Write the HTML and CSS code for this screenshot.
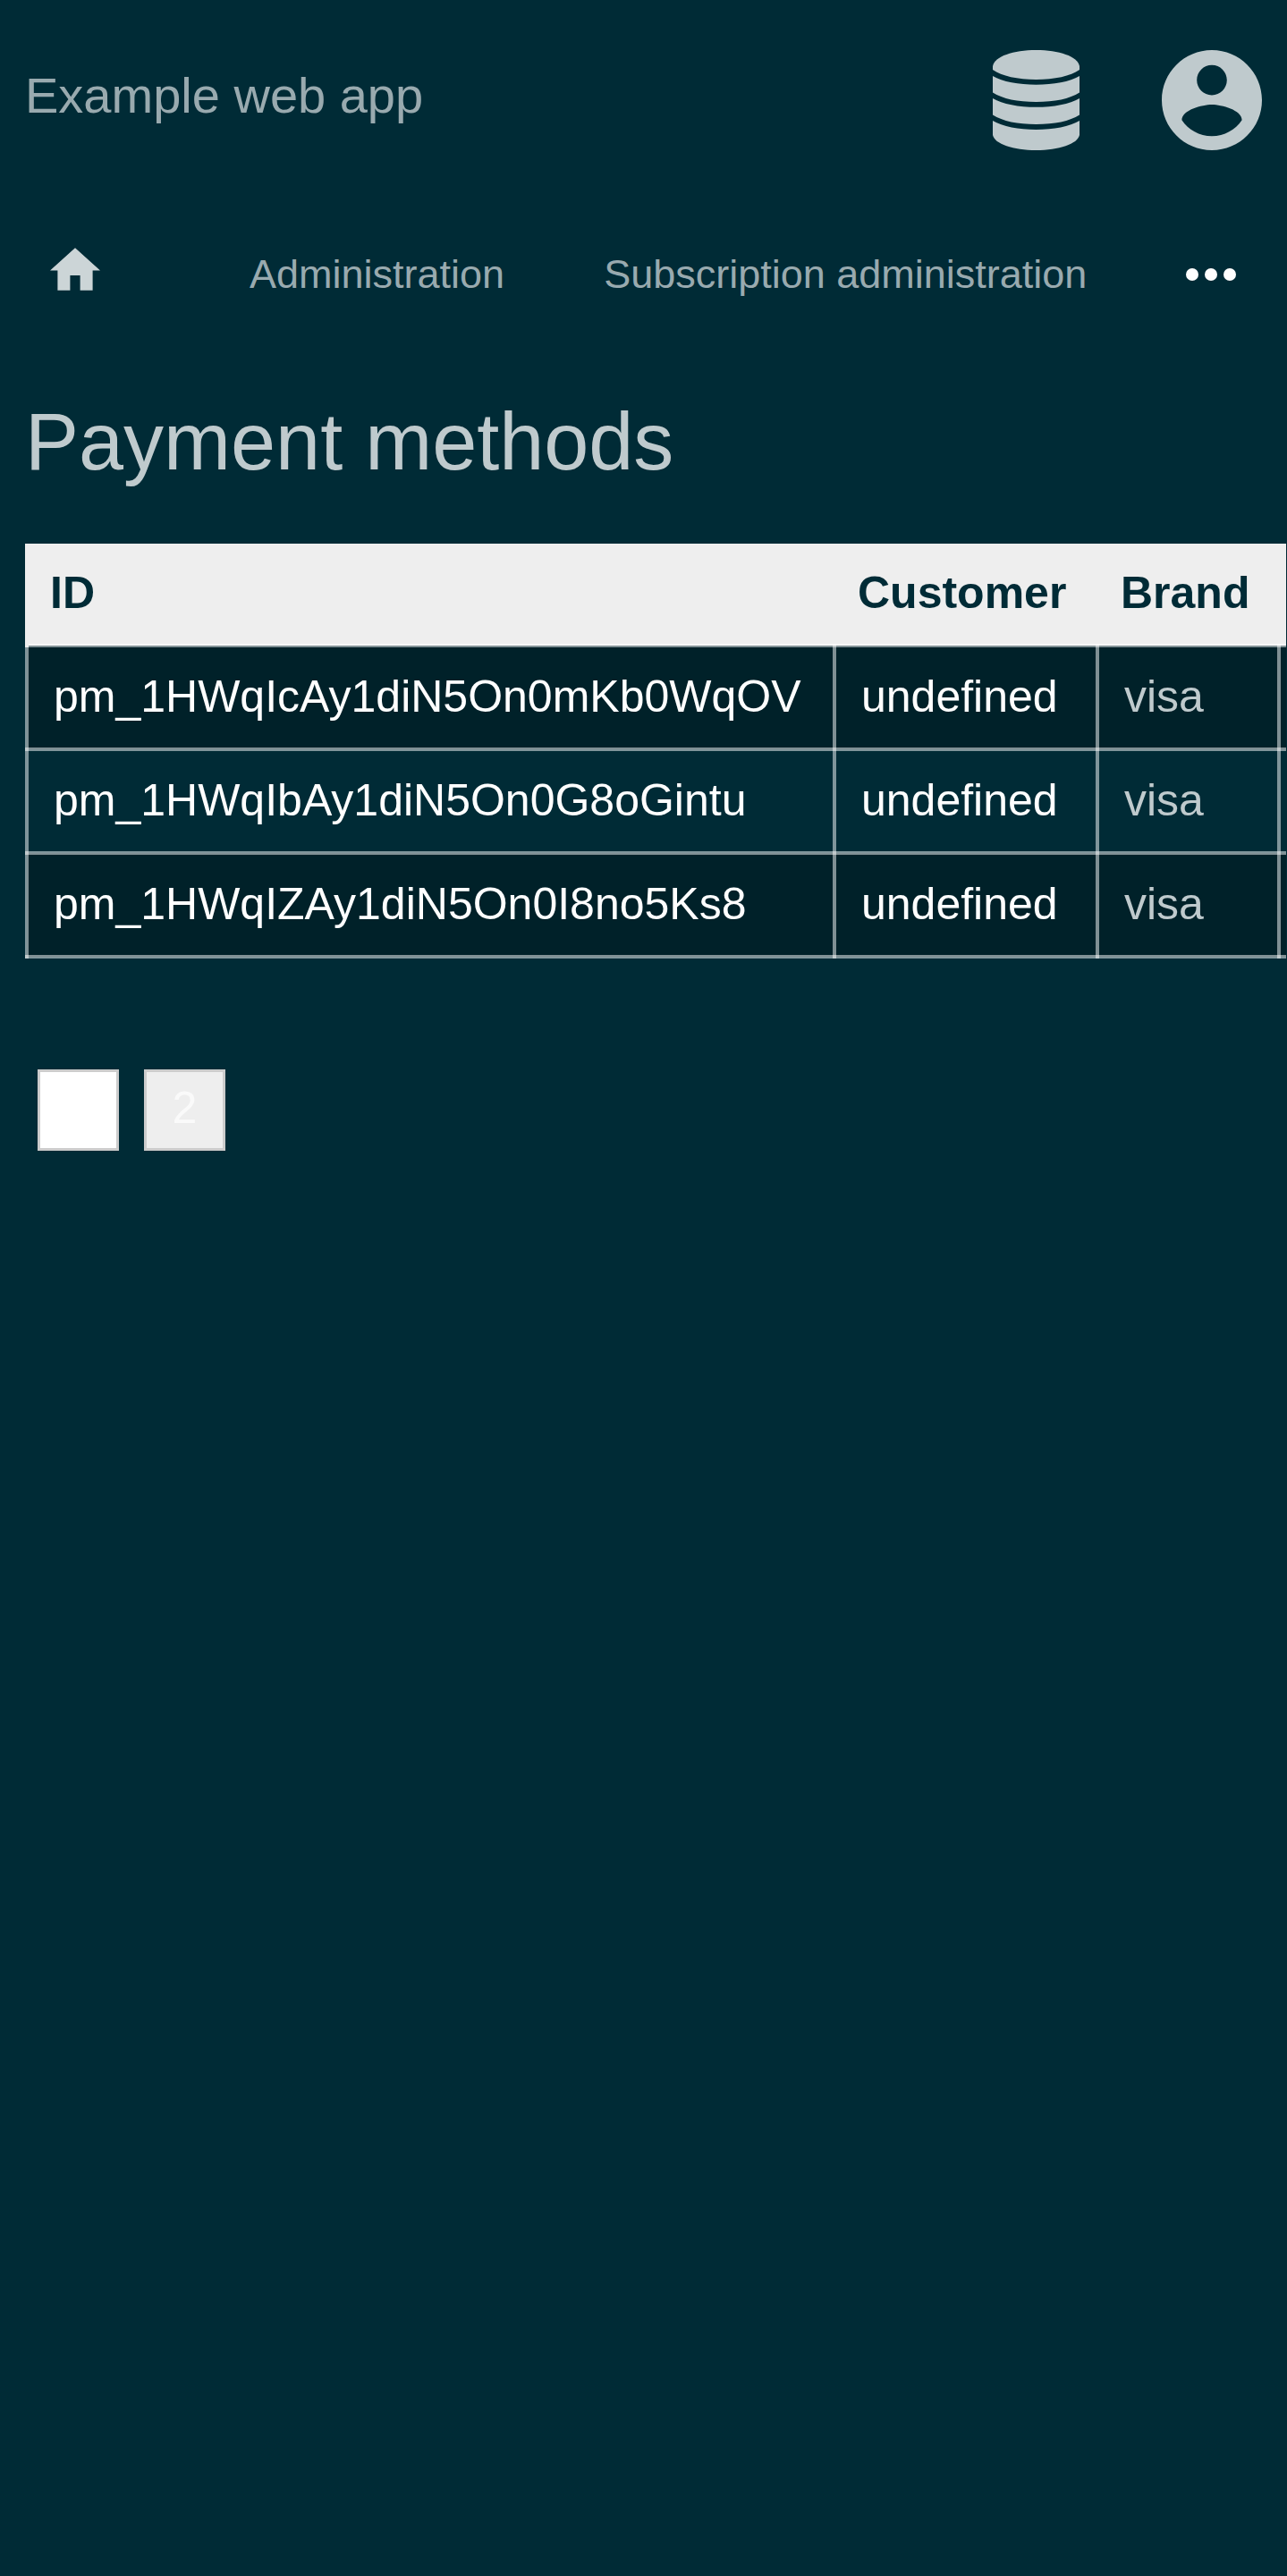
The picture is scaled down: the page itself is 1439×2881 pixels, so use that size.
FILE: index.html
```html
<!DOCTYPE html>
<html lang="en">
<head>
<meta charset="utf-8">
<meta name="viewport" content="width=device-width, initial-scale=1">
<title>Payment methods</title>
<link rel="stylesheet" href="styles.css">
</head>
<body>
<header class="topbar">
  <a class="brand" href="#">Example web app</a>
  <div class="actions">
    <button class="icon-button" type="button" aria-label="Database">
      <svg width="98" height="112" viewBox="0 0 98 112" fill="currentColor" aria-hidden="true">
        <path d="M0 18C2 7 23 0 48.500 0S95 7 97 18V22C87 29 69 33 48.500 33S10 29 0 22Z"/>
        <path d="M0 29C11 35.500 29 38.700 48.500 38.700S86 35.500 97 29V47.500C86 54.500 69 58 48.500 58S11 54.500 0 47.500Z"/>
        <path d="M0 54C11 60.500 29 63.800 48.500 63.800S86 60.500 97 54V72.500C86 79.500 69 83 48.500 83S11 79.500 0 72.500Z"/>
        <path d="M0 79C11 85.500 29 89 48.500 89S86 85.500 97 79V95C95 105 74 112 48.500 112S2 105 0 95Z"/>
      </svg>
    </button>
    <button class="icon-button" type="button" aria-label="Account">
      <svg width="112" height="112" viewBox="2 2 20 20" fill="currentColor" aria-hidden="true">
        <path d="M12 2C6.480 2 2 6.480 2 12s4.480 10 10 10 10-4.480 10-10S17.520 2 12 2zm0 3c1.660 0 3 1.340 3 3s-1.340 3-3 3-3-1.340-3-3 1.340-3 3-3zm0 14.200c-2.500 0-4.710-1.280-6-3.220.03-1.990 4-3.080 6-3.080 1.990 0 5.970 1.090 6 3.080-1.290 1.940-3.500 3.220-6 3.220z"/>
      </svg>
    </button>
  </div>
</header>
<nav class="crumbs" aria-label="Breadcrumb">
  <a class="home" href="#" aria-label="Home">
    <svg width="56" height="48" viewBox="2 3 20 17" fill="currentColor" aria-hidden="true"><path d="M10 20v-6h4v6h5v-8h3L12 3 2 12h3v8z"/></svg>
  </a>
  <a href="#">Administration</a>
  <a href="#">Subscription administration</a>
  <button class="icon-button more" type="button" aria-label="More">
    <svg width="56" height="14" viewBox="0 0 56 14" fill="currentColor" aria-hidden="true"><circle cx="7" cy="7" r="7"/><circle cx="28" cy="7" r="7"/><circle cx="49" cy="7" r="7"/></svg>
  </button>
</nav>
<main class="content">
  <h1>Payment methods</h1>
  <div class="table-scroll">
    <table>
      <thead>
        <tr><th class="id" scope="col">ID</th><th class="customer" scope="col">Customer</th><th class="card" scope="col">Brand</th><td></td></tr>
      </thead>
      <tbody>
        <tr><td><a href="#">pm_1HWqIcAy1diN5On0mKb0WqOV</a></td><td><a href="#">undefined</a></td><td>visa</td><td></td></tr>
        <tr><td><a href="#">pm_1HWqIbAy1diN5On0G8oGintu</a></td><td><a href="#">undefined</a></td><td>visa</td><td></td></tr>
        <tr><td><a href="#">pm_1HWqIZAy1diN5On0I8no5Ks8</a></td><td><a href="#">undefined</a></td><td>visa</td><td></td></tr>
      </tbody>
    </table>
  </div>
  <div class="pages">
    <button class="page current" type="button" aria-current="page">1</button>
    <button class="page" type="button">2</button>
  </div>
</main>
</body>
</html>
```

FILE: styles.css
```css
* { box-sizing: border-box; }

body {
  margin: 0;
  min-height: 100vh;
  background: #002b36;
  color: #bfcacd;
  font: 50px/56px "Liberation Sans", Arial, sans-serif;
}

a { color: inherit; text-decoration: none; }
svg { display: block; }

.icon-button {
  padding: 0;
  border: 0;
  background: none;
  color: inherit;
}

.topbar {
  display: flex;
  align-items: center;
  justify-content: space-between;
  padding: 56px 28px;
}

.brand {
  padding-bottom: 10px;
  color: #99aaaf;
  font-size: 56px;
  line-height: 64px;
}

.actions { display: flex; gap: 91px; }

.crumbs {
  display: flex;
  align-items: center;
  gap: 111px;
  padding: 53px 56px 55px;
  color: #99aaaf;
  font-size: 45px;
  white-space: nowrap;
}

.home {
  margin-right: 56px;
  padding-bottom: 12px;
  color: #ccd5d7;
}

.more { color: #fff; }

.content { padding: 48px 0 0 28px; }

h1 {
  margin: 0 0 60px;
  font-size: 90px;
  font-weight: 400;
  line-height: 108px;
}

.table-scroll {
  margin-right: 1px;
  overflow-x: auto;
  scrollbar-width: none;
}

table {
  border-collapse: collapse;
  white-space: nowrap;
}

thead { background: #eee; color: #002b36; }

th {
  padding: 27px 26px 29px;
  text-align: left;
}

.id { min-width: 903px; border-left: 4px solid #eee; padding-left: 24px; }
.customer { min-width: 294px; }
.card { min-width: 203px; }

tbody td {
  padding: 27px 28px 29px;
  border: 4px solid rgba(255, 255, 255, 0.5);
}

td:last-child { min-width: 112px; }

tbody tr:nth-child(odd) { background: #002129; }

tbody a { color: #fff; }

.pages {
  display: flex;
  gap: 28px;
  padding: 124px 14px;
}

.page {
  width: 91px;
  height: 91px;
  padding: 0 0 6px;
  border: 3px solid #ccc;
  background: #eee;
  color: #fafafa;
  font: inherit;
}

.current { background: #fff; color: #fff; }
```
